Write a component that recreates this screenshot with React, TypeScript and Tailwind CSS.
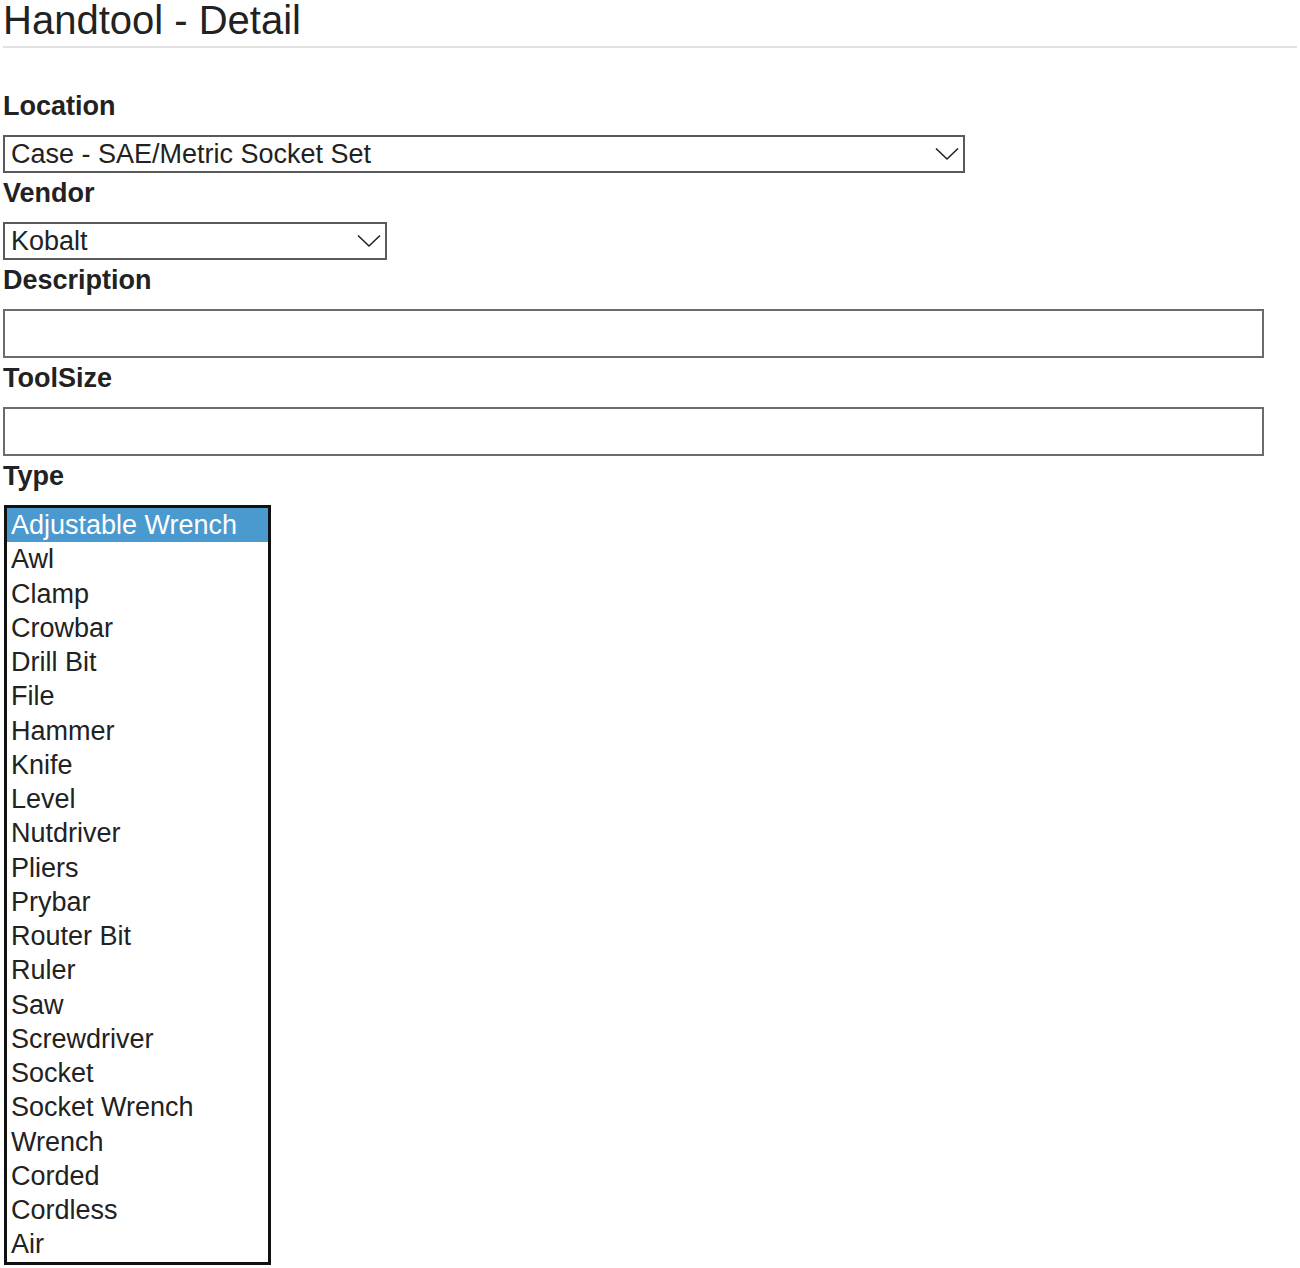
const TYPES = [
  "Adjustable Wrench",
  "Awl",
  "Clamp",
  "Crowbar",
  "Drill Bit",
  "File",
  "Hammer",
  "Knife",
  "Level",
  "Nutdriver",
  "Pliers",
  "Prybar",
  "Router Bit",
  "Ruler",
  "Saw",
  "Screwdriver",
  "Socket",
  "Socket Wrench",
  "Wrench",
  "Corded",
  "Cordless",
  "Air",
];

function Chevron() {
  return (
    <svg width="24" height="14" viewBox="0 0 24 14" className="shrink-0">
      <polyline points="1,1.5 12,12 23,1.5" fill="none" stroke="#222" strokeWidth="1.6" />
    </svg>
  );
}

function Label({ children }: { children: string }) {
  return (
    <div className="mb-[14px] text-[27px] font-bold leading-[30px] text-[#222]">{children}</div>
  );
}

function Dropdown({ value, width }: { value: string; width: string }) {
  return (
    <div
      className={`mb-[5px] flex h-[38px] items-center justify-between border-2 border-[#5a5a5a] pl-[6px] pr-[4px] ${width}`}
    >
      <span className="text-[27px] leading-[30px] text-[#222]">{value}</span>
      <Chevron />
    </div>
  );
}

function TextBox() {
  return <div className="mb-[5px] h-[49px] w-[1261px] border-2 border-[#6b6b6b] bg-white" />;
}

export default function App() {
  return (
    <div
      className="min-h-[1268px] bg-white px-[3px] text-[#222]"
      style={{ fontFamily: '"Liberation Sans", Arial, sans-serif' }}
    >
      <h1 className="pt-[2px] text-[40px] font-normal leading-[36px] text-[#222]">Handtool - Detail</h1>
      <div className="mt-[8px] h-[2px] w-full bg-[#e2e2e2]" />

      <div className="mt-[43px]">
        <Label>Location</Label>
        <Dropdown value="Case - SAE/Metric Socket Set" width="w-[962px]" />

        <Label>Vendor</Label>
        <Dropdown value="Kobalt" width="w-[384px]" />

        <Label>Description</Label>
        <TextBox />

        <Label>ToolSize</Label>
        <TextBox />

        <Label>Type</Label>
        <div className="ml-[1px] w-[267px] border-[3px] border-[#111]">
          {TYPES.map((t, i) => (
            <div
              key={t}
              className={`h-[34.25px] pl-[4px] text-[27px] leading-[34.25px] ${
                i === 0 ? "bg-[#4a99cf] text-white" : "text-[#222]"
              }`}
            >
              {t}
            </div>
          ))}
        </div>
      </div>
    </div>
  );
}
